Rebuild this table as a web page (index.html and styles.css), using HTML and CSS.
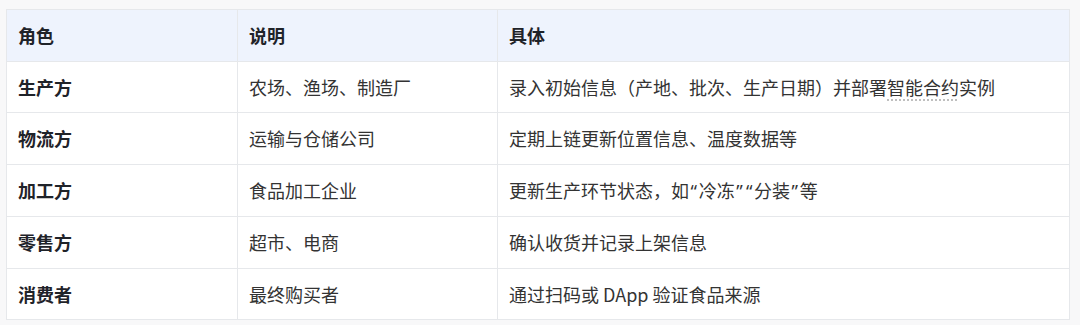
FILE: index.html
```html
<!DOCTYPE html>
<html lang="zh-CN">
<head>
<meta charset="utf-8">
<title>角色表</title>
<link rel="stylesheet" href="styles.css">
</head>
<body>
<table class="roles">
  <colgroup>
    <col class="c1">
    <col class="c2">
    <col class="c3">
  </colgroup>
  <thead>
    <tr><th>角色</th><th>说明</th><th>具体</th></tr>
  </thead>
  <tbody>
    <tr><td class="role">生产方</td><td>农场、渔场、制造厂</td><td>录入初始信息（产地、批次、生产日期）并部署<span class="dotted">智能合约</span>实例</td></tr>
    <tr><td class="role">物流方</td><td>运输与仓储公司</td><td>定期上链更新位置信息、温度数据等</td></tr>
    <tr><td class="role">加工方</td><td>食品加工企业</td><td>更新生产环节状态，如<span class="q">“</span>冷冻<span class="q">”</span><span class="q">“</span>分装<span class="q">”</span>等</td></tr>
    <tr><td class="role">零售方</td><td>超市、电商</td><td>确认收货并记录上架信息</td></tr>
    <tr><td class="role">消费者</td><td>最终购买者</td><td>通过扫码或 DApp 验证食品来源</td></tr>
  </tbody>
</table>
</body>
</html>
```
FILE: styles.css
```css
html, body {
  margin: 0;
  padding: 0;
}
body {
  background: #f8f8f9;
  padding: 9px 0 0 6px;
  font-family: "Noto Sans CJK SC", "Noto Sans", sans-serif;
  font-size: 18px;
  color: #333333;
}
.roles {
  border-collapse: collapse;
  width: 1063px;
  background: #ffffff;
  table-layout: fixed;
}
.c1 { width: 231px; }
.c2 { width: 260px; }
.c3 { width: 572px; }
.roles th,
.roles td {
  border: 1px solid #e6e8eb;
  padding: 12px 11px;
  line-height: 26.5px;
  text-align: left;
  vertical-align: middle;
  white-space: nowrap;
}
.roles th {
  background: #eef3fd;
  font-weight: 700;
  color: #1f2329;
}
.roles td.role {
  font-weight: 700;
  color: #1f2329;
}
.q {
  font-family: "Noto Sans", "Liberation Sans", sans-serif;
  padding: 0 1.6px;
}
.dotted {
  text-decoration: underline dotted #b8b8b8;
  text-underline-offset: 5px;
}
```
